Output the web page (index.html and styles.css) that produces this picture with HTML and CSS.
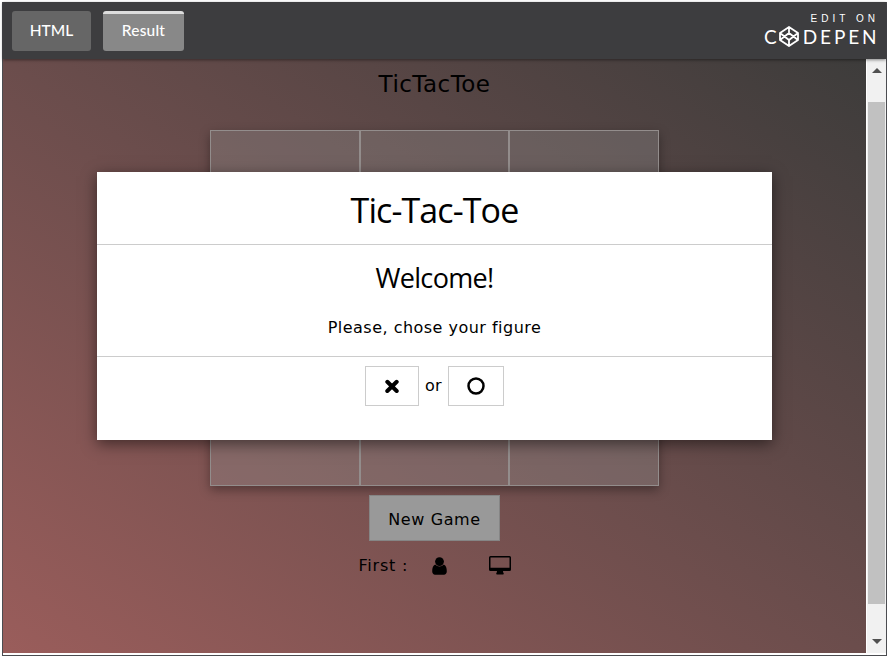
FILE: index.html
```
<!DOCTYPE html>
<html lang="en">
<head>
<meta charset="utf-8">
<title>TicTacToe</title>
<link rel="stylesheet" href="styles.css">
</head>
<body>
<div class="embed">
  <header class="bar">
    <nav class="tabs"><a class="tab">HTML</a><a class="tab active">Result</a></nav>
    <a class="brand">
      <span class="edit">EDIT ON</span>
      <span class="logo"><span>C</span><svg width="22" height="21" viewBox="0 0 22 21" fill="none" stroke="#fff" stroke-width="1.8" stroke-linejoin="round"><path d="M11 1 20 7v7l-9 6-9-6V7zM11 1v6M11 14v6M2 7l9 7 9-7M2 14l9-7 9 7"/></svg><span class="rest">DEPEN</span></span>
    </a>
  </header>
  <div class="viewport">
    <main class="game">
      <h1><span>TicTacToe</span></h1>
      <div class="board"><i></i><i></i><i></i><i></i><i></i><i></i><i></i><i></i><i></i></div>
      <button class="new"><span>New Game</span></button>
      <div class="first"><span class="label">First :</span>
        <svg class="user" width="15" height="18" viewBox="0 0 15 18"><circle cx="7.5" cy="4.6" r="4.4"/><path d="M3.2 7.5C1 8.3.2 11 .2 14.3.2 16.600 1.500 17.800 3 17.800h9c1.500 0 2.800-1.200 2.800-3.500 0-3.300-.8-6-3-6.800-2.300 2.500-6.300 2.500-8.600 0z"/></svg>
        <svg class="screen" width="22" height="19" viewBox="0 0 22 19"><path fill-rule="evenodd" d="M1.500 0h19A1.500 1.500 0 0 1 22 1.500v12a1.500 1.500 0 0 1-1.500 1.500H14c0 1.500.8 2 .8 2.800 0 .5-.3.700-.8.700H8c-.5 0-.8-.2-.8-.7C7.200 17 8 16.500 8 15H1.500A1.500 1.500 0 0 1 0 13.500v-12A1.500 1.500 0 0 1 1.500 0zm0 1.500v10.300h19V1.500z"/></svg>
      </div>
    </main>
    <div class="scroll">
      <svg width="10" height="5" viewBox="0 0 10 5"><path d="M0 5 5 0l5 5z"/></svg>
      <div class="thumb"></div>
      <svg width="10" height="5" viewBox="0 0 10 5"><path d="M0 0h10L5 5z"/></svg>
    </div>
  </div>
</div>
<section class="modal">
  <h2><span>Tic-Tac-Toe</span></h2>
  <div class="body"><h3><span>Welcome!</span></h3><p><span>Please, chose your figure</span></p></div>
  <div class="choice">
    <button class="x"><svg width="14" height="14" viewBox="0 0 14 14"><path d="M2.300 2.800 11.700 12M11.700 2.800 2.300 12" stroke="#000" stroke-width="4" stroke-linecap="round"/></svg></button>
    <span class="or">or</span>
    <button class="o"><svg width="18" height="18" viewBox="0 0 18 18"><circle cx="9" cy="9" r="7.500" fill="none" stroke="#000" stroke-width="2.500"/></svg></button>
  </div>
</section>
</body>
</html>
```
FILE: styles.css
```
* { box-sizing: border-box; }
body { margin: 0; height: 656px; overflow: hidden; background: #fff; font: 16px/20px "DejaVu Sans", sans-serif; color: #000; }
h1, h2, h3, p { margin: 0; font-weight: 400; }
svg { display: block; flex: none; }
button { font: inherit; color: #000; padding: 0; display: flex; align-items: center; justify-content: center; }
.embed { margin: 2px 0 0 2px; width: 885px; height: 654px; border: 1px solid #4b4c50; border-top: 0; display: flex; flex-direction: column; }
.bar { height: 57px; flex: none; background: #3d3d3f; display: flex; justify-content: space-between; position: relative; box-shadow: 0 1px 3px rgba(0,0,0,.45); }
.tabs { display: flex; gap: 12px; padding: 9px 0 0 9px; }
.tab { width: 79px; height: 40px; border-radius: 3px; background: #666; color: #fff; font: 500 15.500px/39px Lato, sans-serif; text-align: center; }
.tab.active { width: 81px; background: #888; border-top: 3px solid #ddd; line-height: 33px; letter-spacing: .2px; }
.brand { width: 112px; margin-right: 10px; padding-top: 11px; color: #fff; font-family: Lato, sans-serif; }
.edit { display: block; font: 10px/12px "Liberation Sans", sans-serif; letter-spacing: 4px; text-align: right; margin-right: -3px; white-space: nowrap; }
.logo { display: flex; align-items: center; font-size: 19px; line-height: 21px; margin-top: 1px; }
.logo svg { margin-left: 1px; }
.rest { letter-spacing: 2.900px; margin-left: 3px; }
.viewport { flex: 1; display: flex; padding-bottom: 2px; }
.game { width: 863px; background: linear-gradient(to top right, #9a5d5b, #6b4d4c 50%, #3d3c3b); display: flex; flex-direction: column; align-items: center; }
h1 { font-size: 23px; line-height: 30px; letter-spacing: .45px; margin-top: 10px; height: 61px; }
.board { width: 449px; height: 356px; display: grid; grid-template-columns: 150px 149px 1fr; grid-template-rows: repeat(3, 1fr); border: 1px solid #938d8c; background: rgba(153,153,153,.3); box-shadow: 0 4px 10px rgba(0,0,0,.35); }
.board i { border-right: 2px solid #938d8c; border-bottom: 2px solid #938d8c; }
.board i:nth-child(3n) { border-right: 0; }
.board i:nth-child(n+7) { border-bottom: 0; }
.new { width: 131px; height: 46px; margin-top: 9px; padding-top: 3px; background: #999; border: 1px solid #858585; letter-spacing: .6px; }
.first { display: flex; align-items: center; width: 152px; height: 20px; margin-top: 14px; }
.label { width: 74px; white-space: nowrap; letter-spacing: .8px; padding-top: 1px; }
.user { margin: 1px 0 0 -1px; }
.screen { margin-left: 42px; }
.scroll { flex: 1; background: #f1f1f1; display: flex; flex-direction: column; align-items: center; justify-content: space-between; padding: 9px 1px 9px 1px; border-left: 1px solid #fff; fill: #505050; }
.thumb { width: 17px; height: 502px; background: #c1c1c1; margin-bottom: 6px; }
.modal { position: absolute; left: 97px; top: 172px; width: 675px; height: 268px; background: #fff; text-align: center; box-shadow: 0 4px 14px rgba(0,0,0,.5); }
h2 { font: 34px/48px "Open Sans", sans-serif; letter-spacing: -.9px; height: 73px; padding-top: 14px; border-bottom: 1px solid #ccc; }
.body { height: 112px; border-bottom: 1px solid #ccc; padding-top: 15px; }
h3 { font: 27px/36px "Open Sans", sans-serif; letter-spacing: -.65px; }
p { margin-top: 22px; letter-spacing: .48px; }
.choice { display: flex; justify-content: center; align-items: center; padding-top: 9px; }
.choice button { height: 40px; border: 1px solid #ccc; background: #fff; }
.choice .x { width: 54px; }
.choice .o { width: 56px; }
.or { width: 29px; letter-spacing: .4px; }
```
